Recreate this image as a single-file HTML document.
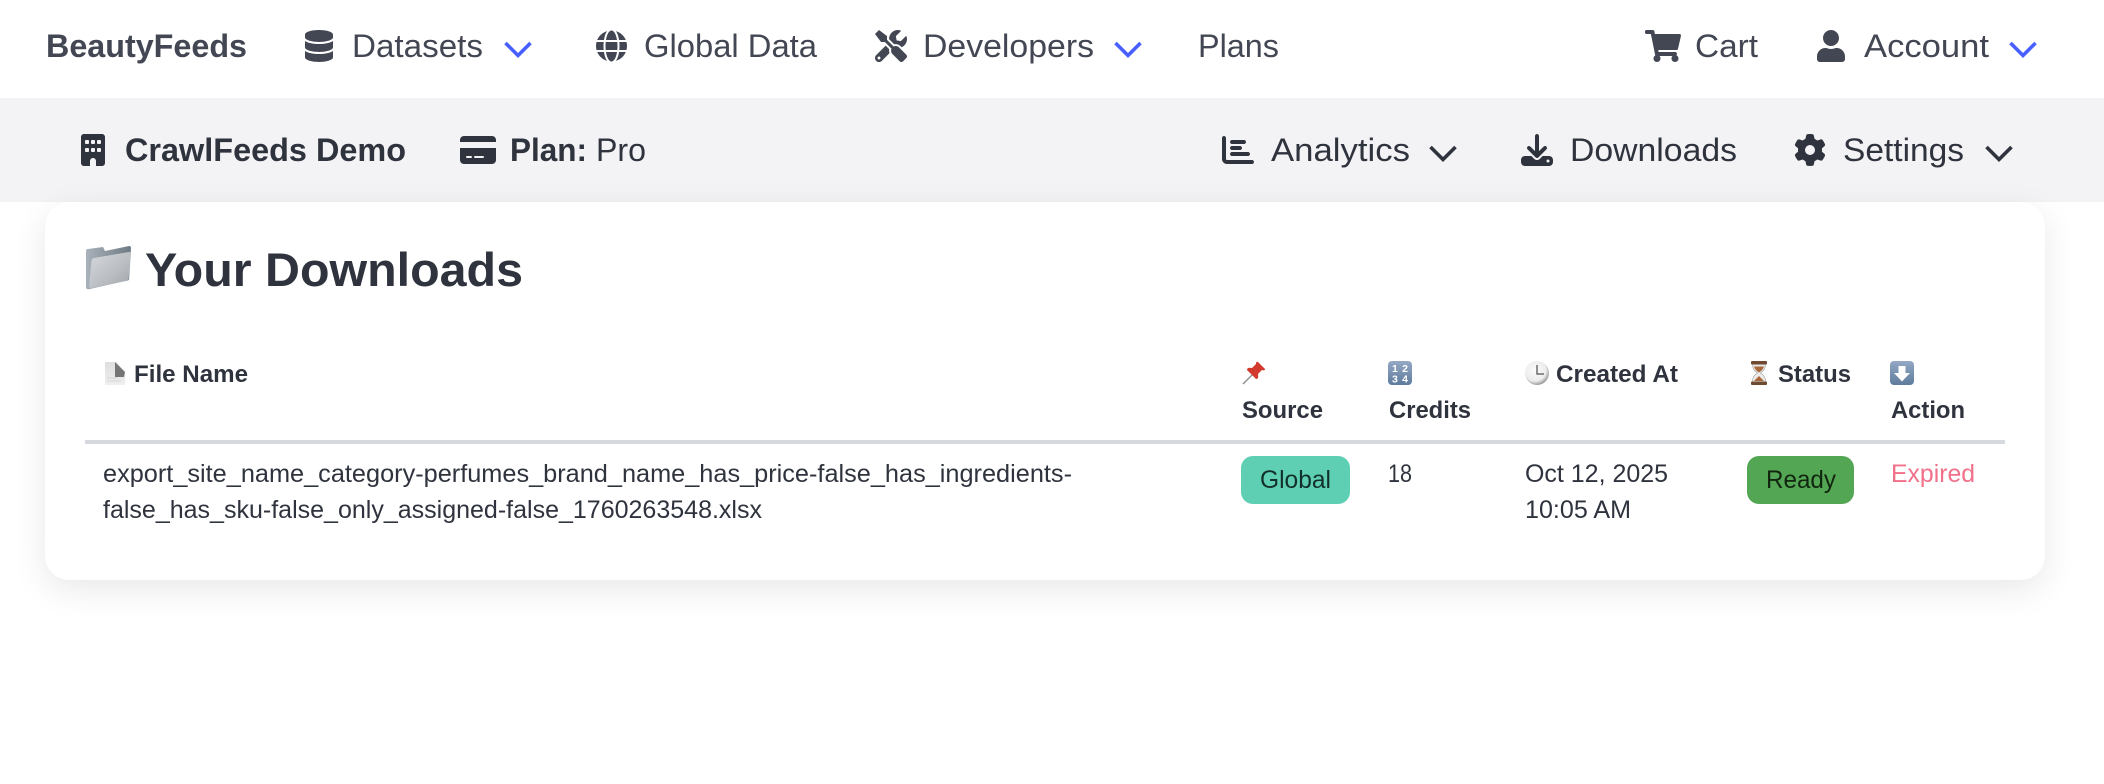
<!DOCTYPE html>
<html lang="en"><head><meta charset="utf-8"><title>Your Downloads</title>
<style>
html,body{margin:0;padding:0;width:2104px;height:784px;overflow:hidden;background:#fff;font-family:"Liberation Sans",sans-serif}
.bar{position:absolute;left:0;top:98px;width:2104px;height:104px;background:#f3f3f5}
.card{position:absolute;left:45px;top:202px;width:2000px;height:378px;background:#fff;border-radius:24px;box-shadow:0 10px 34px rgba(10,10,10,.09),0 0 1px rgba(10,10,10,.04)}
svg{position:absolute;left:0;top:0}
text{font-family:"Liberation Sans",sans-serif}
.n{font-size:32px;fill:#434753}
.s{font-size:32px;fill:#2f333d}
.b{font-weight:700}
.t{font-size:25px;fill:#2f333d}
.h{font-size:24px;font-weight:700;fill:#2f333d}
.i1{fill:#434753}.i2{fill:#2f333d}
</style></head><body>
<div class="bar"></div><div class="card"></div>
<svg width="2104" height="784" viewBox="0 0 2104 784" xmlns="http://www.w3.org/2000/svg">
<defs>
<linearGradient id="fb" x1="0" y1="0" x2="1" y2="0"><stop offset="0" stop-color="#a9b2ba"/><stop offset="1" stop-color="#6e7a85"/></linearGradient>
<linearGradient id="ff" x1="0" y1="0" x2="1" y2="1"><stop offset="0" stop-color="#d6d9dd"/><stop offset=".6" stop-color="#b9bdc2"/><stop offset="1" stop-color="#a0a5ab"/></linearGradient>
<linearGradient id="kb" x1="0" y1="0" x2="0" y2="1"><stop offset="0" stop-color="#93a9c4"/><stop offset="1" stop-color="#5f7b9d"/></linearGradient>
<linearGradient id="dc" x1="0" y1="0" x2="0" y2="1"><stop offset="0" stop-color="#dedede"/><stop offset="1" stop-color="#efefef"/></linearGradient>
<radialGradient id="ck" cx=".42" cy=".38" r=".65"><stop offset="0" stop-color="#fbfbfb"/><stop offset=".7" stop-color="#ececec"/><stop offset="1" stop-color="#8f8f8f"/></radialGradient>
</defs>

<!-- top nav -->
<text class="n b" x="46" y="57" textLength="201" lengthAdjust="spacingAndGlyphs">BeautyFeeds</text>
<svg x="305" y="30" width="28" height="32" viewBox="0 0 448 512"><path class="i1" d="M448 73.143v45.714C448 159.143 347.667 192 224 192S0 159.143 0 118.857V73.143C0 32.857 100.333 0 224 0s224 32.857 224 73.143zM448 176v102.857C448 319.143 347.667 352 224 352S0 319.143 0 278.857V176c48.125 33.143 136.208 48.572 224 48.572S399.874 209.143 448 176zm0 160v102.857C448 479.143 347.667 512 224 512S0 479.143 0 438.857V336c48.125 33.143 136.208 48.572 224 48.572S399.874 369.143 448 336z"/></svg>
<text class="n" x="352" y="57" textLength="131" lengthAdjust="spacingAndGlyphs">Datasets</text>
<path d="M505.5 43L518 55.5L530.5 43" fill="none" stroke="#485fff" stroke-width="3.6"/>
<svg x="596" y="30" width="31" height="32" viewBox="0 0 496 512"><path class="i1" d="M336.5 160C322 70.7 287.8 8 248 8s-74 62.7-88.5 152h177zM152 256c0 22.2 1.2 43.5 3.3 64h185.3c2.1-20.5 3.3-41.8 3.3-64s-1.2-43.5-3.3-64H155.3c-2.1 20.5-3.3 41.8-3.3 64zm324.7-96c-28.6-67.9-86.5-120.4-158-141.6 24.4 33.8 41.2 84.7 50 141.6h108zM177.2 18.4C105.8 39.6 47.8 92.1 19.3 160h108c8.7-56.9 25.5-107.8 49.9-141.6zM487.4 192H372.7c2.1 21 3.3 42.5 3.3 64s-1.2 43-3.3 64h114.6c5.5-20.5 8.6-41.8 8.6-64s-3.1-43.5-8.5-64zM120 256c0-21.5 1.2-43 3.3-64H8.6C3.2 212.5 0 233.8 0 256s3.2 43.5 8.6 64h114.6c-2-21-3.2-42.5-3.2-64zm39.5 96c14.5 89.3 48.7 152 88.5 152s74-62.7 88.5-152h-177zm159.3 141.6c71.4-21.2 129.4-73.7 158-141.6h-108c-8.8 56.9-25.6 107.8-50 141.6zM19.3 352c28.6 67.9 86.5 120.4 158 141.6-24.4-33.8-41.2-84.7-50-141.6h-108z"/></svg>
<text class="n" x="644" y="57" textLength="173" lengthAdjust="spacingAndGlyphs">Global Data</text>
<svg x="875" y="30" width="32" height="32" viewBox="0 0 512 512"><path class="i1" d="M501.1 395.7L384 278.6c-23.1-23.1-57.6-27.6-85.4-13.9L192 158.1V96L64 0 0 64l96 128h62.1l106.6 106.6c-13.6 27.8-9.2 62.3 13.9 85.4l117.1 117.1c14.6 14.6 38.2 14.6 52.7 0l52.7-52.7c14.5-14.6 14.5-38.2 0-52.7zM331.7 225c28.3 0 54.9 11 74.9 31l19.4 19.4c15.8-6.9 30.8-16.5 43.8-29.5 37.1-37.1 49.7-89.3 37.9-136.7-2.2-9-13.5-12.1-20.1-5.5l-74.4 74.4-67.9-11.3L334 98.9l74.4-74.4c6.6-6.6 3.4-17.9-5.7-20.2-47.4-11.7-99.6.9-136.6 37.9-28.5 28.5-41.9 66.1-41.2 103.6l82.1 82.1c8.1-1.9 16.5-2.9 24.7-2.9zm-103.9 82l-56.7-56.7L18.7 402.8c-25 25-25 65.5 0 90.5s65.5 25 90.5 0l123.6-123.6c-7.6-19.9-9.9-41.6-5-62.7zM64 472c-13.2 0-24-10.8-24-24 0-13.3 10.7-24 24-24s24 10.7 24 24c0 13.2-10.7 24-24 24z"/></svg>
<text class="n" x="923" y="57" textLength="171" lengthAdjust="spacingAndGlyphs">Developers</text>
<path d="M1115.5 43L1128 55.5L1140.5 43" fill="none" stroke="#485fff" stroke-width="3.6"/>
<text class="n" x="1198" y="57" textLength="81" lengthAdjust="spacingAndGlyphs">Plans</text>
<svg x="1645" y="30" width="36" height="32" viewBox="0 0 576 512"><path class="i1" d="M528.12 301.319l47.273-208C578.806 78.301 567.391 64 551.99 64H159.208l-9.166-44.81C147.758 8.021 137.93 0 126.529 0H24C10.745 0 0 10.745 0 24v16c0 13.255 10.745 24 24 24h69.883l70.248 343.435C147.325 417.1 136 435.222 136 456c0 30.928 25.072 56 56 56s56-25.072 56-56c0-15.674-6.447-29.835-16.824-40h209.647C430.447 426.165 424 440.326 424 456c0 30.928 25.072 56 56 56s56-25.072 56-56c0-22.172-12.888-41.332-31.579-50.405l5.517-24.276c3.413-15.018-8.002-29.319-23.403-29.319H218.117l-6.545-32h293.145c11.206 0 20.92-7.754 23.403-18.681z"/></svg>
<text class="n" x="1695" y="57" textLength="63" lengthAdjust="spacingAndGlyphs">Cart</text>
<svg x="1817" y="30" width="28" height="32" viewBox="0 0 448 512"><path class="i1" d="M224 256c70.7 0 128-57.3 128-128S294.7 0 224 0 96 57.3 96 128s57.3 128 128 128zm89.6 32h-16.7c-22.2 10.2-46.9 16-72.9 16s-50.6-5.8-72.9-16h-16.7C60.2 288 0 348.2 0 422.4V464c0 26.5 21.5 48 48 48h352c26.5 0 48-21.5 48-48v-41.6c0-74.2-60.2-134.4-134.4-134.4z"/></svg>
<text class="n" x="1864" y="57" textLength="125" lengthAdjust="spacingAndGlyphs">Account</text>
<path d="M2010.5 43L2023 55.5L2035.5 43" fill="none" stroke="#485fff" stroke-width="3.6"/>

<!-- second nav -->
<svg x="81" y="134" width="24" height="32" viewBox="0 0 384 512"><path class="i2" d="M48 0C21.5 0 0 21.5 0 48V464c0 26.5 21.5 48 48 48h96V432c0-26.5 21.5-48 48-48s48 21.5 48 48v80h96c26.5 0 48-21.5 48-48V48c0-26.5-21.5-48-48-48H48zM64 240c0-8.8 7.2-16 16-16h32c8.8 0 16 7.2 16 16v32c0 8.8-7.2 16-16 16H80c-8.8 0-16-7.2-16-16V240zm112-16h32c8.8 0 16 7.2 16 16v32c0 8.8-7.2 16-16 16H176c-8.8 0-16-7.2-16-16V240c0-8.8 7.2-16 16-16zm80 16c0-8.8 7.2-16 16-16h32c8.8 0 16 7.2 16 16v32c0 8.8-7.2 16-16 16H272c-8.8 0-16-7.2-16-16V240zM80 96h32c8.8 0 16 7.2 16 16v32c0 8.8-7.2 16-16 16H80c-8.8 0-16-7.2-16-16V112c0-8.8 7.2-16 16-16zm80 16c0-8.8 7.2-16 16-16h32c8.8 0 16 7.2 16 16v32c0 8.8-7.2 16-16 16H176c-8.8 0-16-7.2-16-16V112zM272 96h32c8.8 0 16 7.2 16 16v32c0 8.8-7.2 16-16 16H272c-8.8 0-16-7.2-16-16V112c0-8.8 7.2-16 16-16z"/></svg>
<text class="s b" x="125" y="161" textLength="281" lengthAdjust="spacingAndGlyphs">CrawlFeeds Demo</text>
<svg x="460" y="134" width="36" height="32" viewBox="0 0 576 512"><path class="i2" d="M64 32C28.7 32 0 60.7 0 96v32H576V96c0-35.3-28.7-64-64-64H64zM576 224H0V416c0 35.3 28.7 64 64 64H512c35.3 0 64-28.7 64-64V224zM112 352h64c8.8 0 16 7.2 16 16s-7.2 16-16 16H112c-8.8 0-16-7.2-16-16s7.2-16 16-16zm112 16c0-8.8 7.2-16 16-16H368c8.8 0 16 7.2 16 16s-7.2 16-16 16H240c-8.8 0-16-7.2-16-16z"/></svg>
<text class="s b" x="510" y="161" textLength="77" lengthAdjust="spacingAndGlyphs">Plan:</text>
<text class="s" x="596" y="161" textLength="50" lengthAdjust="spacingAndGlyphs">Pro</text>
<svg x="1222" y="134" width="32" height="32" viewBox="0 0 512 512"><path class="i2" d="M32 32c17.7 0 32 14.3 32 32V400c0 8.8 7.2 16 16 16H480c17.7 0 32 14.3 32 32s-14.3 32-32 32H80c-44.2 0-80-35.8-80-80V64C0 46.3 14.3 32 32 32zm96 96c0-17.7 14.3-32 32-32l192 0c17.7 0 32 14.3 32 32s-14.3 32-32 32l-192 0c-17.7 0-32-14.3-32-32zm32 64H288c17.7 0 32 14.3 32 32s-14.3 32-32 32H160c-17.7 0-32-14.3-32-32s14.3-32 32-32zm0 96H416c17.7 0 32 14.3 32 32s-14.3 32-32 32H160c-17.7 0-32-14.3-32-32s14.3-32 32-32z"/></svg>
<text class="s" x="1271" y="161" textLength="139" lengthAdjust="spacingAndGlyphs">Analytics</text>
<path d="M1430.5 147L1443 159.5L1455.5 147" fill="none" stroke="#2f333d" stroke-width="3.6"/>
<svg x="1521" y="134" width="32" height="32" viewBox="0 0 512 512"><path class="i2" d="M288 32c0-17.7-14.3-32-32-32s-32 14.3-32 32V274.7l-73.4-73.4c-12.5-12.5-32.8-12.5-45.3 0s-12.5 32.8 0 45.3l128 128c12.5 12.5 32.8 12.5 45.3 0l128-128c12.5-12.5 12.5-32.8 0-45.3s-32.8-12.5-45.3 0L288 274.7V32zM64 352c-35.3 0-64 28.7-64 64v32c0 35.3 28.7 64 64 64H448c35.3 0 64-28.7 64-64V416c0-35.3-28.7-64-64-64H346.5l-45.3 45.3c-25 25-65.5 25-90.5 0L165.5 352H64zm368 56a24 24 0 1 1 0 48 24 24 0 1 1 0-48z"/></svg>
<text class="s" x="1570" y="161" textLength="167" lengthAdjust="spacingAndGlyphs">Downloads</text>
<svg x="1794" y="134" width="32" height="32" viewBox="0 0 512 512"><path class="i2" d="M495.9 166.6c3.2 8.7 .5 18.4-6.4 24.6l-43.3 39.4c1.1 8.3 1.7 16.8 1.7 25.4s-.6 17.1-1.7 25.4l43.3 39.4c6.9 6.2 9.6 15.9 6.4 24.6c-4.4 11.9-9.7 23.3-15.8 34.3l-4.7 8.1c-6.6 11-14 21.4-22.1 31.2c-5.9 7.2-15.7 9.6-24.5 6.8l-55.7-17.7c-13.4 10.3-28.2 18.9-44 25.4l-12.5 57.1c-2 9.1-9 16.3-18.2 17.8c-13.8 2.3-28 3.5-42.5 3.5s-28.7-1.2-42.5-3.5c-9.2-1.5-16.2-8.7-18.2-17.8l-12.5-57.1c-15.8-6.5-30.6-15.1-44-25.4L83.1 425.9c-8.8 2.8-18.6 .3-24.5-6.8c-8.1-9.8-15.5-20.2-22.1-31.2l-4.7-8.1c-6.1-11-11.4-22.4-15.8-34.3c-3.2-8.7-.5-18.4 6.4-24.6l43.3-39.4C64.6 273.1 64 264.6 64 256s.6-17.1 1.7-25.4L22.4 191.2c-6.9-6.2-9.6-15.9-6.4-24.6c4.4-11.9 9.7-23.3 15.8-34.3l4.7-8.1c6.6-11 14-21.4 22.1-31.2c5.9-7.2 15.7-9.6 24.5-6.8l55.7 17.7c13.4-10.3 28.2-18.9 44-25.4l12.5-57.1c2-9.1 9-16.3 18.2-17.8C227.3 1.2 241.5 0 256 0s28.7 1.2 42.5 3.5c9.2 1.5 16.2 8.7 18.2 17.8l12.5 57.1c15.8 6.5 30.6 15.1 44 25.4l55.7-17.7c8.8-2.8 18.6-.3 24.5 6.8c8.1 9.8 15.5 20.2 22.1 31.2l4.7 8.1c6.1 11 11.4 22.4 15.8 34.3zM256 336a80 80 0 1 0 0-160 80 80 0 1 0 0 160z"/></svg>
<text class="s" x="1843" y="161" textLength="121" lengthAdjust="spacingAndGlyphs">Settings</text>
<path d="M1986.5 147L1999 159.5L2011.5 147" fill="none" stroke="#2f333d" stroke-width="3.6"/>

<!-- title -->
<path d="M86 251Q86 249 88 249L103 247L105 251L129 246Q131 246 131 248L129 280L90 289Q86 290 86 287Z" fill="url(#fb)"/>
<path d="M94 258L129 252Q131 252 131 254L128.5 279Q128.5 281 126 281L92 288Q89 288.5 89 286L91.5 261Q92 258.5 94 258Z" fill="url(#ff)"/>
<text x="145" y="286" font-size="47.5" font-weight="700" fill="#2f333d" textLength="378" lengthAdjust="spacingAndGlyphs">Your Downloads</text>

<!-- table header -->
<path d="M105 362H116L125 372V385H105Z" fill="url(#dc)"/>
<path d="M115 362L125 372L124 377H115Z" fill="#757575"/>
<path d="M107 378H118M107 381H121" stroke="#d6d6d6" stroke-width="1"/>
<text class="h" x="134" y="382" textLength="114" lengthAdjust="spacingAndGlyphs">File Name</text>

<path d="M1243 384L1253 374" stroke="#8d8d8d" stroke-width="1.4"/>
<path d="M1258 362L1265 369Q1265 371 1262 370L1258 374Q1259 379 1256 379L1247 370Q1247 367 1252 368L1256 364Q1256 361 1258 362Z" fill="#d33a2e"/>
<text class="h" x="1242" y="418" textLength="81" lengthAdjust="spacingAndGlyphs">Source</text>

<rect x="1388" y="361" width="24" height="24" rx="4" fill="url(#kb)"/>
<text x="1400" y="372" font-size="10.5" font-weight="700" fill="#fff" text-anchor="middle" textLength="16" lengthAdjust="spacing">12</text>
<text x="1400" y="382.5" font-size="10.5" font-weight="700" fill="#fff" text-anchor="middle" textLength="16" lengthAdjust="spacing">34</text>
<text class="h" x="1389" y="418" textLength="82" lengthAdjust="spacingAndGlyphs">Credits</text>

<circle cx="1537" cy="373" r="12" fill="url(#ck)"/>
<path d="M1537 365V374H1544" fill="none" stroke="#6d6d6d" stroke-width="1.5"/>
<text class="h" x="1556" y="382" textLength="122" lengthAdjust="spacingAndGlyphs">Created At</text>

<rect x="1751" y="361" width="16" height="3.5" rx="1" fill="#6f4a2f"/>
<rect x="1751" y="381.5" width="16" height="3.5" rx="1" fill="#6f4a2f"/>
<path d="M1752.5 364.5H1765.5Q1765.5 370 1760.5 373Q1765.5 376 1765.5 381.5H1752.5Q1752.5 376 1757.5 373Q1752.5 370 1752.5 364.5Z" fill="#ecebe8" stroke="#9a9a98" stroke-width=".6"/>
<path d="M1754 366.5H1764Q1763 370 1759 372.5Q1755 370 1754 366.5ZM1754 381L1759 376L1764 381Z" fill="#a8683a"/>
<text class="h" x="1778" y="382" textLength="73" lengthAdjust="spacingAndGlyphs">Status</text>

<rect x="1890" y="361" width="24" height="24" rx="4" fill="url(#kb)"/>
<path d="M1898.5 366H1905.5V373H1910L1902 381.5L1894 373H1898.5Z" fill="#fff"/>
<text class="h" x="1891" y="418" textLength="74" lengthAdjust="spacingAndGlyphs">Action</text>

<rect x="85" y="440" width="1920" height="4" fill="#d6d9de"/>

<!-- row -->
<text class="t" x="103" y="482" textLength="969" lengthAdjust="spacingAndGlyphs">export_site_name_category-perfumes_brand_name_has_price-false_has_ingredients-</text>
<text class="t" x="103" y="518" textLength="659" lengthAdjust="spacingAndGlyphs">false_has_sku-false_only_assigned-false_1760263548.xlsx</text>
<rect x="1241" y="456" width="109" height="48" rx="12" fill="#5fcfb4"/>
<text x="1260" y="488" font-size="25" fill="#12302a" textLength="71" lengthAdjust="spacingAndGlyphs">Global</text>
<text class="t" x="1388" y="482" textLength="24" lengthAdjust="spacingAndGlyphs">18</text>
<text class="t" x="1525" y="482" textLength="143" lengthAdjust="spacingAndGlyphs">Oct 12, 2025</text>
<text class="t" x="1525" y="518" textLength="106" lengthAdjust="spacingAndGlyphs">10:05 AM</text>
<rect x="1747" y="456" width="107" height="48" rx="12" fill="#53a653"/>
<text x="1766" y="488" font-size="25" fill="#11250f" textLength="70" lengthAdjust="spacingAndGlyphs">Ready</text>
<text x="1891" y="482" font-size="25" fill="#f1708a" textLength="84" lengthAdjust="spacingAndGlyphs">Expired</text>
</svg>
</body></html>
